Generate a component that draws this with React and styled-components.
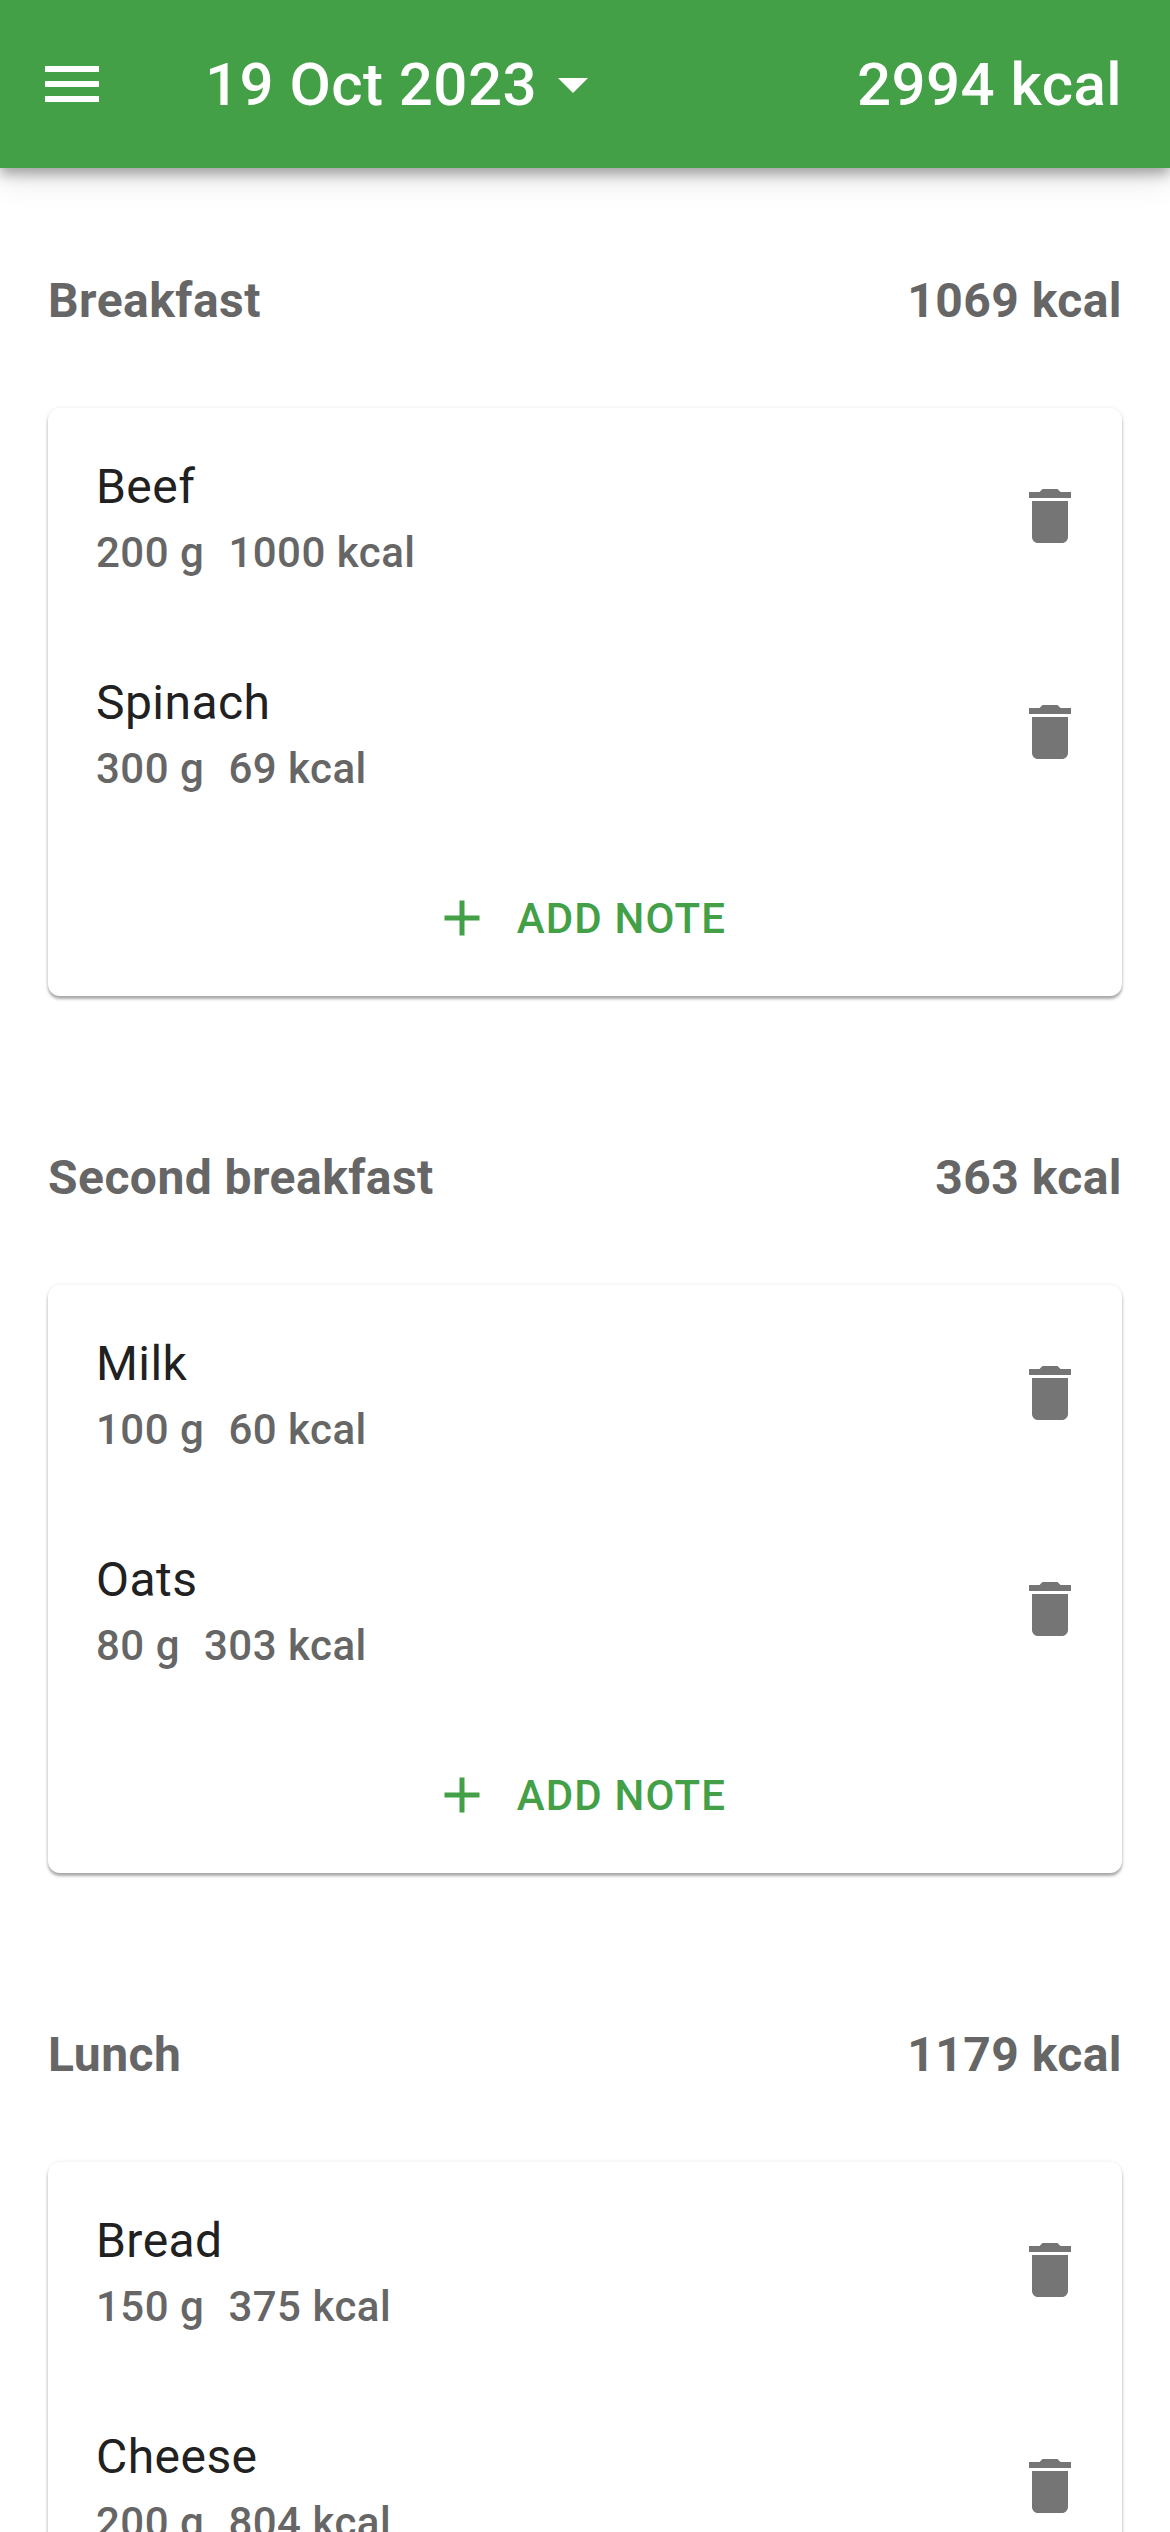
import styled, { createGlobalStyle } from "styled-components";

const meals = [
    {
        title: "Breakfast",
        kcal: 1069,
        items: [
            { name: "Beef", grams: 200, kcal: 1000 },
            { name: "Spinach", grams: 300, kcal: 69 },
        ],
    },
    {
        title: "Second breakfast",
        kcal: 363,
        items: [
            { name: "Milk", grams: 100, kcal: 60 },
            { name: "Oats", grams: 80, kcal: 303 },
        ],
    },
    {
        title: "Lunch",
        kcal: 1179,
        items: [
            { name: "Bread", grams: 150, kcal: 375 },
            { name: "Cheese", grams: 200, kcal: 804 },
        ],
    },
];

const MenuIcon = () => (
    <svg width="72" height="72" viewBox="0 0 24 24" fill="#fff">
        <path d="M3 18h18v-2H3v2zm0-5h18v-2H3v2zm0-7v2h18V6H3z" />
    </svg>
);

const CaretIcon = () => (
    <svg width="72" height="72" viewBox="0 0 24 24" fill="#fff">
        <path d="M7 10l5 5 5-5z" />
    </svg>
);

const TrashIcon = () => (
    <svg width="72" height="72" viewBox="0 0 24 24" fill="#757575">
        <path d="M6 19c0 1.1.9 2 2 2h8c1.1 0 2-.9 2-2V7H6v12zM19 4h-3.5l-1-1h-5l-1 1H5v2h14V4z" />
    </svg>
);

const PlusIcon = () => (
    <svg width="60" height="60" viewBox="0 0 24 24" fill="#43a047">
        <path d="M19 13h-6v6h-2v-6H5v-2h6V5h2v6h6v2z" />
    </svg>
);

export default function App() {
    return (
        <>
            <Global />
            <Screen>
                <Header>
                    <MenuIcon />
                    <DateButton>
                        19 Oct 2023
                        <CaretIcon />
                    </DateButton>
                    <div>2994 kcal</div>
                </Header>
                <Content>
                    {meals.map((meal) => (
                        <Meal key={meal.title}>
                            <MealHead>
                                <span>{meal.title}</span>
                                <span>{meal.kcal} kcal</span>
                            </MealHead>
                            <Card>
                                {meal.items.map((item) => (
                                    <Row key={item.name}>
                                        <RowText>
                                            <Name>{item.name}</Name>
                                            <Details>
                                                <span>{item.grams} g</span>
                                                <span>{item.kcal} kcal</span>
                                            </Details>
                                        </RowText>
                                        <TrashIcon />
                                    </Row>
                                ))}
                                <AddNote>
                                    <PlusIcon />
                                    ADD NOTE
                                </AddNote>
                            </Card>
                        </Meal>
                    ))}
                </Content>
            </Screen>
        </>
    );
}

const Global = createGlobalStyle`
    html, body {
        margin: 0;
        height: 2532px;
        overflow: hidden;
        background: #fff;
    }
    * {
        box-sizing: border-box;
    }
`;

const Screen = styled.div`
    width: 1170px;
    height: 2532px;
    overflow: hidden;
    font-family: Roboto, sans-serif;
    background: #fff;
`;

const Header = styled.header`
    position: relative;
    height: 168px;
    display: flex;
    align-items: center;
    padding: 0 48px 0 36px;
    background: #43a047;
    color: #fff;
    font-size: 60px;
    font-weight: 500;
    letter-spacing: 0.45px;
    box-shadow: 0 6px 12px rgba(0, 0, 0, 0.32), 0 12px 30px rgba(0, 0, 0, 0.1);
`;

const DateButton = styled.div`
    display: flex;
    align-items: center;
    margin-left: 97px;
    flex: 1;
`;

const Content = styled.main`
    padding: 24px 48px 0;
`;

const Meal = styled.section`
    margin-bottom: 73px;
`;

const MealHead = styled.div`
    height: 216px;
    display: flex;
    align-items: center;
    justify-content: space-between;
    font-size: 48px;
    font-weight: 700;
    letter-spacing: 0.45px;
    color: #666;
`;

const Card = styled.div`
    background: #fff;
    border-radius: 12px;
    box-shadow: 0 3px 3px rgba(0, 0, 0, 0.32), 0 0 4px rgba(0, 0, 0, 0.08);
`;

const Row = styled.div`
    height: 216px;
    display: flex;
    align-items: center;
    justify-content: space-between;
    padding: 0 36px 0 48px;
`;

const RowText = styled.div`
    padding-top: 7px;
`;

const Name = styled.div`
    font-size: 48px;
    line-height: 66px;
    letter-spacing: 0.45px;
    color: #212121;
`;

const Details = styled.div`
    display: flex;
    gap: 24px;
    font-size: 42px;
    line-height: 66px;
    font-weight: 500;
    letter-spacing: 0.5px;
    color: #666;
`;

const AddNote = styled.div`
    height: 156px;
    display: flex;
    align-items: center;
    justify-content: center;
    gap: 25px;
    padding-right: 12px;
    font-size: 42px;
    font-weight: 500;
    letter-spacing: 1.15px;
    color: #43a047;
`;
